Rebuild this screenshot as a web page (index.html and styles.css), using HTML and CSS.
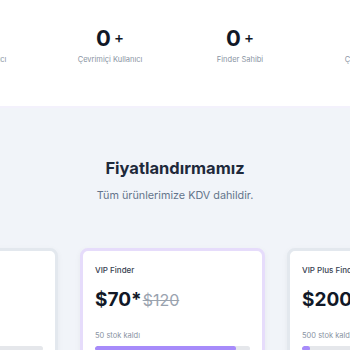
FILE: index.html
```html
<!DOCTYPE html>
<html lang="tr">
<head>
    <meta charset="UTF-8">
    <meta name="viewport" content="width=device-width, initial-scale=1.0">
    <title>Fiyatlandırma</title>
    <link rel="stylesheet" href="styles.css">
</head>
<body>
    <section class="stats">
        <div class="stat">
            <div class="stat-value">0<span class="plus">+</span></div>
            <div class="stat-label">Kayıtlı Kullanıcı</div>
        </div>
        <div class="stat">
            <div class="stat-value">0<span class="plus">+</span></div>
            <div class="stat-label">Çevrimiçi Kullanıcı</div>
        </div>
        <div class="stat">
            <div class="stat-value">0<span class="plus">+</span></div>
            <div class="stat-label">Finder Sahibi</div>
        </div>
        <div class="stat">
            <div class="stat-value">0<span class="plus">+</span></div>
            <div class="stat-label">Çözülen Talep</div>
        </div>
    </section>

    <section class="pricing">
        <h2 class="pricing-title">Fiyatlandırmamız</h2>
        <p class="pricing-subtitle">Tüm ürünlerimize KDV dahildir.</p>

        <div class="plans">
            <div class="plan">
                <div class="plan-name">Finder</div>
                <div class="plan-price">$40*</div>
                <div class="plan-stock">100 stok kaldı</div>
                <div class="stock-bar"><div class="stock-fill" style="width: 0%"></div></div>
            </div>
            <div class="plan plan-featured">
                <div class="plan-name">VIP Finder</div>
                <div class="plan-price">$70*<span class="old-price">$120</span></div>
                <div class="plan-stock">50 stok kaldı</div>
                <div class="stock-bar"><div class="stock-fill" style="width: 91%"></div></div>
            </div>
            <div class="plan">
                <div class="plan-name">VIP Plus Finder</div>
                <div class="plan-price">$200*</div>
                <div class="plan-stock">500 stok kaldı</div>
                <div class="stock-bar"><div class="stock-fill" style="width: 5%"></div></div>
            </div>
        </div>
    </section>
</body>
</html>
```

FILE: styles.css
```css
:root {
    --text-primary: #1e293b;
    --text-secondary: #64748b;
    --text-muted: #8a94a3;
    --section-bg: #f1f4f9;
    --card-border: #e3e8ee;
    --accent: #a78bfa;
    --accent-border: #e6dcfb;
}

* {
    margin: 0;
    padding: 0;
    box-sizing: border-box;
}

body {
    font-family: 'Inter', 'Noto Sans', sans-serif;
    background: #ffffff;
    color: var(--text-primary);
    overflow: hidden;
}

.stats {
    display: flex;
    justify-content: center;
    height: 108px;
    padding-top: 25px;
    background: #ffffff;
    border-bottom: 2px solid #f3f1fc;
}

.stat {
    flex: 0 0 130px;
    text-align: center;
}

.stat-value {
    font-size: 22px;
    font-weight: 700;
    line-height: 26px;
    color: #111827;
}

.plus {
    font-size: 15px;
    font-weight: 500;
    margin-left: 3px;
    vertical-align: 3px;
}

.stat-label {
    margin-top: 4px;
    font-size: 7.5px;
    color: var(--text-muted);
}

.pricing {
    background: var(--section-bg);
    padding-top: 49px;
    height: 242px;
    text-align: center;
}

.pricing-title {
    font-size: 16.5px;
    font-weight: 700;
    line-height: 22px;
    color: var(--text-primary);
}

.pricing-subtitle {
    margin-top: 10px;
    font-size: 10.8px;
    color: var(--text-secondary);
}

.plans {
    display: flex;
    justify-content: center;
    gap: 22px;
    margin-top: 46px;
    padding-right: 5px;
}

.plan {
    flex: 0 0 185px;
    text-align: left;
    background: #ffffff;
    border: 3px solid var(--card-border);
    border-radius: 8px;
    padding: 14px 12px 12px;
    box-shadow: 0 2px 6px rgba(15, 23, 42, 0.05);
}

.plan-featured {
    border-color: var(--accent-border);
}

.plan-name {
    font-size: 8px;
    font-weight: 500;
    color: #374151;
}

.plan-price {
    margin-top: 12px;
    font-size: 19px;
    font-weight: 700;
    line-height: 26px;
    color: #111827;
}

.old-price {
    margin-left: 1px;
    font-size: 16px;
    font-weight: 400;
    color: #9aa3af;
    text-decoration: line-through;
}

.plan-stock {
    margin-top: 18px;
    font-size: 7.5px;
    color: var(--text-muted);
}

.stock-bar {
    margin-top: 6px;
    height: 5px;
    border-radius: 3px;
    background: #e5e7eb;
    overflow: hidden;
}

.stock-fill {
    height: 100%;
    border-radius: 3px;
    background: var(--accent);
}
```
